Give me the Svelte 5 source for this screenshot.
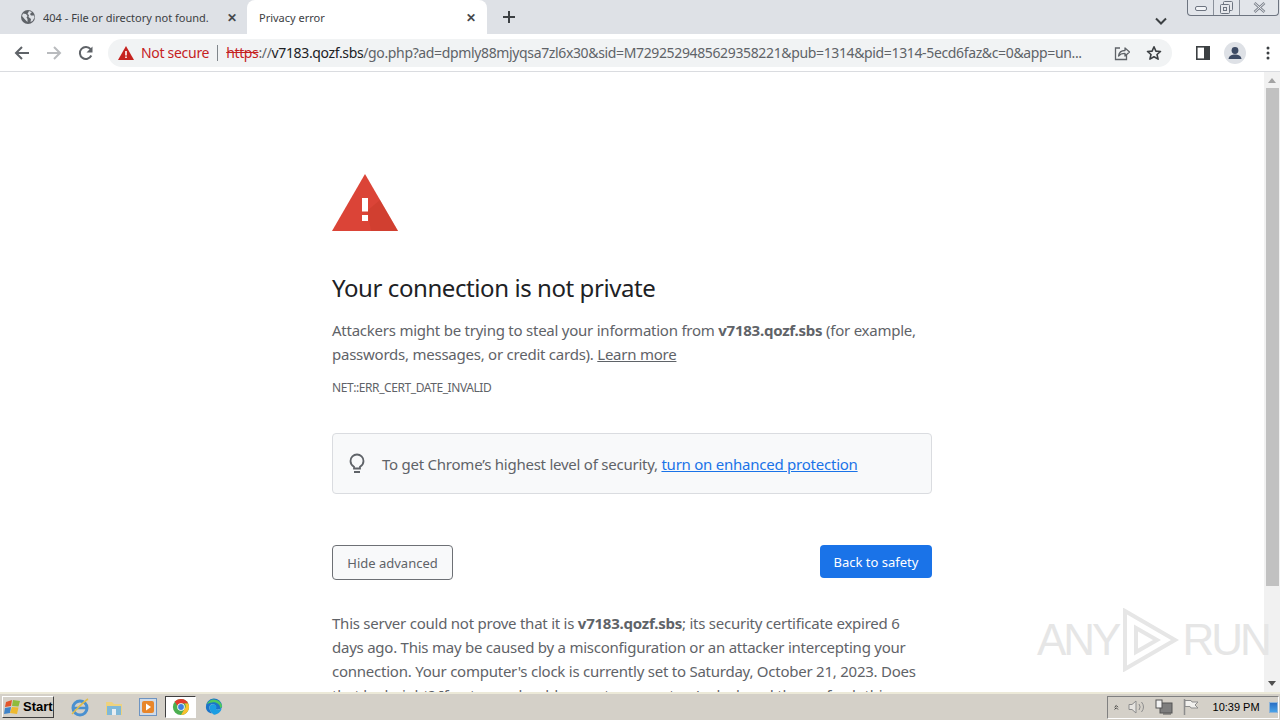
<script>
  const url = 'go.php?ad=dpmly88mjyqsa7zl6x30&sid=M7292529485629358221&pub=1314&pid=1314-5ecd6faz&c=0&app=un...';
</script>

<div class="screen">
  <header class="tabs">
    <div class="tab inactive">
      <svg class="globe" viewBox="0 0 16 16"><circle cx="8" cy="8" r="7" fill="#5f6368"/><path d="M3 4.5l3 .5 1.5 2-1 1.5 1 1.5v3L5 10.5 2 7zM9 2l3 1-2 2 1 1.5h3l.5 2-2 3.5-2 1 .5-3-2.5-2 .5-2-1.5-1z" fill="#dee1e6"/></svg>
      <span class="title">404 - File or directory not found.</span>
      <span class="close">✕</span>
    </div>
    <div class="tab active">
      <span class="title">Privacy error</span>
      <span class="close">✕</span>
    </div>
    <svg class="plus" viewBox="0 0 14 14"><path d="M7 1v12M1 7h12" stroke="#3c4043" stroke-width="2"/></svg>
    <div class="spacer"></div>
    <svg class="chev" viewBox="0 0 12 8"><path d="M1 1.5l5 5 5-5" fill="none" stroke="#3c4043" stroke-width="2"/></svg>
    <div class="winctl">
      <span class="min"><svg viewBox="0 0 12 6"><rect x=".5" y=".5" width="11" height="4" rx="1.5" fill="#f2f4f7" stroke="#6d7480"/></svg></span>
      <span class="max"><svg viewBox="0 0 13 13"><rect x="3.5" y=".5" width="9" height="9" rx="1" fill="#e6e8ec" stroke="#6d7480"/><rect x=".5" y="3.5" width="9" height="9" rx="1" fill="#e6e8ec" stroke="#6d7480"/><rect x="3.5" y="6.5" width="3" height="3" fill="none" stroke="#6d7480"/></svg></span>
      <span class="cls"><svg viewBox="0 0 13 11"><path d="M1.5 1l10 9M11.500 1l-10 9" stroke="#7d838d" stroke-width="2.600"/><path d="M1.500 1l10 9M11.500 1l-10 9" stroke="#eceef1" stroke-width="1"/></svg></span>
    </div>
  </header>

  <nav class="toolbar">
    <svg class="nav" viewBox="0 0 16 16"><path d="M15 8H2.500M8 2L2 8l6 6" fill="none" stroke="#5f6368" stroke-width="2"/></svg>
    <svg class="nav" viewBox="0 0 16 16"><path d="M1 8h12.500M8 2l6 6-6 6" fill="none" stroke="#b9bbbe" stroke-width="2"/></svg>
    <svg class="nav" viewBox="0 0 16 16"><path d="M13.300 10.500A6 6 0 1 1 12.600 4.200" fill="none" stroke="#5f6368" stroke-width="2"/><path d="M14.500 1.500v6h-6z" fill="#5f6368"/></svg>
    <div class="omni">
      <svg class="warn" viewBox="0 0 16 14"><path d="M8 0l8 14H0z" fill="#c5221f"/><path d="M7.200 5h1.600v4.500H7.200zM7.200 10.500h1.600V12H7.200z" fill="#fff"/></svg>
      <span class="notsecure">Not secure</span>
      <span class="divider"></span>
      <span class="url"><span class="https">https</span><span class="sep">://</span><span class="host">v7183.qozf.sbs</span><span class="path">/{url}</span></span>
      <svg class="omni-ic share" viewBox="0 0 16 16"><path d="M12 5.500H14.500V14.500H1.500V5.500H3" transform="translate(0 0)" fill="none" stroke="none"/><path d="M6 3H1.500v11.500h11V10" fill="none" stroke="#5f6368" stroke-width="1.300"/><path d="M4.500 11c.5-3.500 3-5.500 6.500-5.500V3l4.500 4-4.500 4V8.300c-2.500 0-5 .7-6.500 2.700z" fill="none" stroke="#5f6368" stroke-width="1.300" stroke-linejoin="round"/></svg>
      <svg class="omni-ic star" viewBox="0 0 16 16"><path d="M8 1.800l1.900 4.300 4.600.4-3.500 3 1.100 4.600L8 11.700l-4.100 2.400L5 9.500l-3.500-3 4.600-.4z" fill="none" stroke="#3c4043" stroke-width="1.600" stroke-linejoin="round"/></svg>
    </div>
    <svg class="panel" viewBox="0 0 14 14"><rect x=".8" y=".8" width="12.400" height="12.400" fill="#fff" stroke="#3c4043" stroke-width="1.600"/><rect x="8" y="1" width="5" height="12" fill="#3c4043"/></svg>
    <span class="avatar"><svg viewBox="0 0 22 22"><circle cx="11" cy="11" r="11" fill="#dee1e6"/><circle cx="11" cy="8.500" r="3.400" fill="#3c4a63"/><path d="M4.500 17c.5-3.500 3.500-4.500 6.500-4.500s6 1 6.500 4.500z" fill="#3c4a63"/></svg></span>
    <svg class="dots" viewBox="0 0 4 14"><circle cx="2" cy="2" r="1.500" fill="#3c4043"/><circle cx="2" cy="7" r="1.500" fill="#3c4043"/><circle cx="2" cy="12" r="1.500" fill="#3c4043"/></svg>
  </nav>

  <div class="body">
    <main class="page">
      <div class="content">
        <svg class="alert" viewBox="0 0 66 58">
          <path d="M33 0l33 57H0z" fill="#db4437"/>
          <path d="M35.500 36.500l3.500 20.500h27L48 26z" fill="#c53929" opacity=".45"/>
          <rect x="30" y="24" width="6" height="13.500" fill="#fff"/>
          <rect x="30" y="41" width="6" height="6" fill="#fff"/>
        </svg>
        <h1>Your connection is not private</h1>
        <p class="desc">Attackers might be trying to steal your information from <b>v7183.qozf.sbs</b> (for example, passwords, messages, or credit cards). <a class="learn" href="#learn">Learn more</a></p>
        <div class="code">NET::ERR_CERT_DATE_INVALID</div>
        <div class="promo">
          <svg class="bulb" viewBox="0 0 16 22"><path d="M5 15.500v-1.800C3 12.500 1.500 10.500 1.500 8a6.500 6.500 0 0 1 13 0c0 2.500-1.500 4.500-3.500 5.700v1.800z" fill="none" stroke="#5f6368" stroke-width="1.800"/><rect x="5" y="18" width="6" height="2" fill="#5f6368"/></svg>
          <span>To get Chrome’s highest level of security, <a class="enhanced" href="#protect">turn on enhanced protection</a></span>
        </div>
        <div class="actions">
          <button class="secondary">Hide advanced</button>
          <button class="primary">Back to safety</button>
        </div>
        <p class="details">This server could not prove that it is <b>v7183.qozf.sbs</b>; its security certificate expired 6 days ago. This may be caused by a misconfiguration or an attacker intercepting your connection. Your computer's clock is currently set to Saturday, October 21, 2023. Does that look right? If not, you should correct your system's clock and then refresh this page.</p>
      </div>
    </main>
    <aside class="scrollbar">
      <span class="arrow up"></span>
      <span class="thumb"></span>
      <span class="arrow down"></span>
    </aside>
    <div class="watermark" aria-hidden="true">
      <span>ANY</span>
      <svg viewBox="0 0 60 64"><path d="M5 3l50 29L5 61zM16 20v24l21-12z" fill="none" stroke="#e6e6e6" stroke-width="4"/></svg>
      <span>RUN</span>
    </div>
  </div>

  <footer class="taskbar">
    <button class="start">
      <svg viewBox="0 0 18 16"><path d="M2 3l6-2-1 6-6 1z" fill="#e2562b"/><path d="M9 1l7 1-1.500 5.500L8 7z" fill="#8fbb3c"/><path d="M1 9l6-1-1 6-6 1z" fill="#3f83c8"/><path d="M8 8l6.500.5L13 15l-7-1z" fill="#eeb92e"/></svg>
      Start
    </button>
    <svg class="tb-ic ie" viewBox="0 0 20 20"><circle cx="10" cy="11" r="7" fill="none" stroke="#4a90d0" stroke-width="3"/><path d="M4 11h12" stroke="#4a90d0" stroke-width="2.500"/><path d="M2 17C5 14 13 5 18 2" fill="none" stroke="#e0bd4a" stroke-width="1.500"/></svg>
    <svg class="tb-ic folder" viewBox="0 0 20 20"><path d="M2 5h6l2 2h8v11H2z" fill="#eed27e"/><path d="M3 9h14v9H3z" fill="#7fb8d8"/><path d="M8 12h4v6H8z" fill="#e8eef2"/></svg>
    <svg class="tb-ic media" viewBox="0 0 20 20"><rect x="1.500" y="1.500" width="17" height="17" fill="#d0dbe8" stroke="#6d94c2"/><rect x="4" y="4" width="12" height="12" rx="2" fill="#e8862a"/><path d="M8 6.500l5 3.500-5 3.500z" fill="#fff"/></svg>
    <span class="chrome-slot">
      <svg viewBox="0 0 20 20"><circle cx="10" cy="10" r="9" fill="#4caf50"/><path d="M10 1a9 9 0 0 1 8 5h-8a4 4 0 0 0-4 2.500L3 3.800A9 9 0 0 1 10 1z" fill="#e33b2e"/><path d="M18 6a9 9 0 0 1-8 13l4-7a4 4 0 0 0 0-6z" fill="#fbc02d"/><circle cx="10" cy="10" r="4.200" fill="#fff"/><circle cx="10" cy="10" r="3.200" fill="#3f7fe0"/></svg>
    </span>
    <svg class="tb-ic edge" viewBox="0 0 20 20"><path d="M1 10a9 9 0 0 1 18-1c0 3-2.500 4-5 4-1.500 0-2.500-.5-2.500-1 2-2 0-6-4-5C4 8 4 13 8 17 4 17 1 14 1 10z" fill="#1b74c9"/><path d="M8 17c-4-4-4-9 0-10 4-1 6 3 4 5 0 .5 1 1 2.500 1 1.500 0 3-.5 4-1.500-.5 4-4.500 7-8 7-1 0-2-.5-2.500-1.500z" fill="#1b9de2"/><path d="M2 7a9 9 0 0 1 17 2c0 1-1 2-2 2.500C17 7 12 4 8 5 5 5.500 3 6 2 7z" fill="#4ec95f"/></svg>
    <div class="spacer"></div>
    <div class="tray">
      <svg class="tray-up" viewBox="0 0 8 9"><path d="M1 4l3-3 3 3M1 8l3-3 3 3" fill="none" stroke="#222" stroke-width="1.500"/></svg>
      <svg class="tray-ic" viewBox="0 0 18 16"><path d="M1 5.500h3L8 2v12L4 10.500H1z" fill="#e6e4e0" stroke="#8d8d8d"/><path d="M11 5a5 5 0 0 1 0 6M13.500 3a8 8 0 0 1 0 10" fill="none" stroke="#8d8d8d"/></svg>
      <svg class="tray-ic" viewBox="0 0 18 16"><rect x="5" y="4" width="12" height="10" fill="#7e7e7e" stroke="#555"/><rect x="1" y="1" width="6" height="8" fill="#f2f2f2" stroke="#555"/><path d="M8 15h8" stroke="#555"/></svg>
      <svg class="tray-ic" viewBox="0 0 18 16"><path d="M2.500 0v16" stroke="#8d8d8d" stroke-width="1.500"/><path d="M3 1.500h6l1 1.500h6l-3 3 3 3h-7l-1-1.500H3z" fill="#f2f1ee" stroke="#8d8d8d"/></svg>
      <span class="clock">10:39 PM</span>
      <span class="show-desktop"></span>
    </div>
  </footer>
</div>

<style>
  :global(body) {
    margin: 0;
    overflow: hidden;
  }

  .screen {
    width: 1280px;
    height: 720px;
    display: flex;
    flex-direction: column;
    overflow: hidden;
    font-family: "Noto Sans", "Open Sans", sans-serif;
    background: #fff;
  }

  .spacer { flex: 1; }

  .tabs {
    height: 34px;
    background: #dee1e6;
    display: flex;
    align-items: flex-end;
    position: relative;
    flex: none;
    padding-left: 8px;
    box-sizing: border-box;
  }

  .tab {
    height: 34px;
    width: 240px;
    box-sizing: border-box;
    display: flex;
    align-items: center;
    font-size: 11px;
    color: #3c4043;
    padding: 0 10px 0 12px;
  }

  .tab.active {
    background: #fff;
    border-radius: 8px 8px 0 0;
    color: #3c4043;
    margin-left: -1px;
  }

  .tab.inactive { padding-left: 12px; }

  .globe { width: 16px; height: 16px; margin-right: 7px; flex: none; }

  .title { flex: 1; white-space: nowrap; overflow: hidden; }

  .close { font-size: 12px; font-weight: 700; color: #45484c; width: 12px; text-align: center; }

  .plus { width: 14px; height: 14px; margin: 0 0 10px 15px; }

  .chev { width: 12px; height: 8px; margin: 0 113px 9px 0; }

  .winctl {
    position: absolute;
    right: 1px;
    top: 0;
    width: 92px;
    height: 16px;
    box-sizing: border-box;
    border: 1px solid #6d7480;
    border-top: none;
    border-radius: 0 0 4px 4px;
    display: flex;
    background: #e2e5ea;
  }

  .winctl span { display: flex; align-items: center; justify-content: center; }
  .min { width: 25px; border-right: 1px solid #8a909a; }
  .max { width: 25px; border-right: 1px solid #8a909a; }
  .cls { flex: 1; }
  .min svg { width: 12px; height: 6px; margin-top: 3px; }
  .max svg { width: 13px; height: 13px; }
  .cls svg { width: 13px; height: 11px; }

  .toolbar {
    height: 38px;
    flex: none;
    box-sizing: border-box;
    border-bottom: 1px solid #dadce0;
    display: flex;
    align-items: center;
    padding: 0 0 0 14px;
    background: #fff;
  }

  .nav { width: 16px; height: 16px; margin-right: 16px; flex: none; }

  .omni {
    width: 1064px;
    height: 28px;
    margin-left: -2px;
    flex: none;
    border-radius: 14px;
    background: #f1f3f4;
    display: flex;
    align-items: center;
    box-sizing: border-box;
    padding: 0 10px;
    font-size: 14px;
  }

  .warn { width: 16px; height: 14px; flex: none; }

  .notsecure { color: #c5221f; margin-left: 7px; font-size: 14px; letter-spacing: -0.3px; white-space: nowrap; }

  .divider { width: 1px; height: 16px; background: #80868b; margin: 0 8px 0 8px; flex: none; }

  .url { flex: 1; white-space: nowrap; overflow: hidden; color: #5f6368; letter-spacing: -0.36px; font-size: 14px; }

  .https { color: #c5221f; text-decoration: line-through; }
  .host { color: #202124; }

  .omni-ic { width: 16px; height: 16px; flex: none; }
  .share { margin-left: 15px; }
  .star { margin: 0 0 0 16px; }

  .panel { width: 14px; height: 14px; margin-left: 24px; flex: none; }

  .avatar { width: 22px; height: 22px; margin-left: 14px; flex: none; }
  .avatar svg { width: 22px; height: 22px; display: block; }

  .dots { width: 4px; height: 14px; margin-left: 20px; flex: none; }

  .body {
    flex: 1;
    min-height: 0;
    display: flex;
    position: relative;
  }

  .page {
    flex: 1;
    overflow: hidden;
    min-width: 0;
  }

  .content {
    width: 600px;
    margin-left: 332px;
    padding-top: 102px;
    color: #5f6368;
    font-size: 15px;
    line-height: 24px;
  }

  .alert { width: 66px; height: 58px; display: block; }

  h1 {
    margin: 38px 0 0;
    font-size: 24px;
    font-weight: 400;
    line-height: 36px;
    color: #202124;
    letter-spacing: -0.42px;
  }

  p { margin: 0; }

  .desc { margin-top: 12px; letter-spacing: -0.24px; }
  .details { margin-top: 31px; letter-spacing: -0.24px; }
  b { font-weight: 700; }

  .learn { color: #5f6368; }

  .code {
    margin-top: 10px;
    font-size: 12px;
    line-height: 24px;
    letter-spacing: -0.42px;
    color: #5f6368;
  }

  .promo {
    margin-top: 33px;
    height: 61px;
    box-sizing: border-box;
    background: #f8f9fa;
    border: 1px solid #dadce0;
    border-radius: 4px;
    display: flex;
    align-items: center;
    padding-left: 16px;
    letter-spacing: -0.24px;
    font-size: 15px;
  }

  .bulb { width: 16px; height: 22px; margin-right: 17px; flex: none; }

  .enhanced { color: #1a73e8; }

  .actions {
    margin-top: 51px;
    display: flex;
    justify-content: space-between;
    align-items: flex-start;
  }

  button { font-family: inherit; }

  .secondary {
    width: 121px;
    height: 35px;
    box-sizing: border-box;
    background: #f8f9fa;
    border: 1px solid #6d7075;
    border-radius: 4px;
    color: #5f6368;
    font-size: 13px;
    padding: 0;
  }

  .primary {
    width: 112px;
    height: 33px;
    box-sizing: border-box;
    background: #1a73e8;
    border: none;
    border-radius: 4px;
    color: #fff;
    font-size: 13px;
    padding: 0;
  }

  .scrollbar {
    width: 16px;
    flex: none;
    background: #f1f1f1;
    display: flex;
    flex-direction: column;
    align-items: center;
    margin-right: -1px;
    position: relative;
    left: -1px;
  }

  .thumb {
    width: 13px;
    height: 498px;
    background: #c1c1c1;
    margin-top: 3px;
  }

  .arrow { width: 0; height: 0; border-left: 4px solid transparent; border-right: 4px solid transparent; position: absolute; }
  .arrow.up { border-bottom: 5px solid #a3a3a3; top: 6px; }
  .arrow.down { border-top: 5px solid #505050; bottom: 6px; }
  .scrollbar .thumb { margin-top: 16px; }

  .watermark {
    position: absolute;
    left: 1037px;
    top: 536px;
    display: flex;
    align-items: center;
    gap: 2px;
    color: #e6e6e6;
    font-size: 44px;
    line-height: 64px;
    font-family: "Liberation Sans Narrow", "Liberation Sans", sans-serif;
    letter-spacing: -3px;
    font-weight: 400;
  }

  .watermark svg { width: 60px; height: 64px; }

  .taskbar {
    height: 28px;
    flex: none;
    box-sizing: border-box;
    background: #d4d0c8;
    border-top: 2px solid #ece9d8;
    display: flex;
    align-items: center;
  }

  .start {
    width: 52px;
    height: 22px;
    margin-left: 2px;
    box-sizing: border-box;
    background: #d4d0c8;
    border: 1px solid;
    border-color: #fff #404040 #404040 #fff;
    font: 700 13px/18px "Liberation Sans", sans-serif;
    color: #000;
    display: flex;
    align-items: center;
    gap: 1px;
    padding: 0 0 0 1px;
  }

  .start svg { width: 18px; height: 16px; }

  .tb-ic { width: 20px; height: 20px; flex: none; }
  .ie { margin-left: 16px; }
  .folder { margin-left: 14px; }
  .media { margin-left: 14px; }

  .chrome-slot {
    margin-left: 7px;
    width: 31px;
    height: 22px;
    box-sizing: border-box;
    background: #fff;
    border: 1px solid;
    border-color: #404040 #fff #fff #404040;
    display: flex;
    align-items: center;
    justify-content: center;
  }

  .chrome-slot svg { width: 18px; height: 18px; }
  .edge { margin-left: 9px; width: 18px; height: 18px; }

  .tray {
    height: 23px;
    box-sizing: border-box;
    border: 1px solid;
    border-color: #808080 #fff #fff #808080;
    display: flex;
    align-items: center;
    margin-right: 1px;
    width: 172px;
  }

  .tray-up { width: 8px; height: 9px; margin-left: 6px; }
  .tray-ic { width: 18px; height: 16px; margin-left: 9px; flex: none; }
  .tray-ic:first-of-type { margin-left: 10px; }
  .clock { font: 11px "Liberation Sans", sans-serif; color: #000; margin-left: 13px; white-space: nowrap; }
  .show-desktop { width: 15px; height: 11px; background: linear-gradient(#2a6fc4, #4aa3e8); margin-left: 9px; border: 1px solid #8fb4d8; box-sizing: border-box; }
</style>
